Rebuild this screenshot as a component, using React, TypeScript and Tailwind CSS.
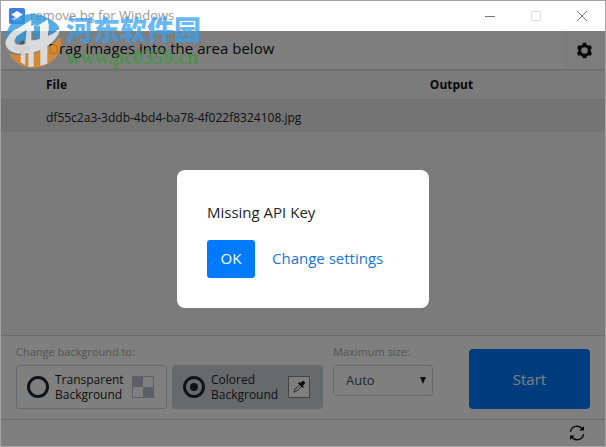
import React, { useState } from "react";

type BackgroundMode = "transparent" | "colored";

interface QueuedFile {
  name: string;
  output: string;
}

const files: QueuedFile[] = [
  { name: "df55c2a3-3ddb-4bd4-ba78-4f022f8324108.jpg", output: "" },
];

const AppIcon: React.FC = () => (
  <svg width="16" height="16" viewBox="0 0 16 16" aria-hidden="true">
    <rect width="16" height="16" rx="2" fill="#3f7fe0" />
    <path d="M8 8.2 2.5 11 8 13.8l5.5-2.8z" fill="#a9c8f7" />
    <path d="M8 3 2.2 6.6 8 10.2l5.8-3.6z" fill="#fff" />
  </svg>
);

// Six-toothed cog with a wide hole
const GearIcon: React.FC = () => (
  <svg width="17" height="17" viewBox="0 0 24 24" aria-hidden="true">
    <circle cx="12" cy="12" r="6.8" fill="none" stroke="#111" strokeWidth="4.4" />
    <path
      d="M12 1v4M12 19v4M2.5 6.5l3.4 2M18.1 15.5l3.4 2M2.5 17.5l3.4-2M18.1 8.5l3.4-2"
      stroke="#111"
      strokeWidth="5"
    />
  </svg>
);

const PickerIcon: React.FC = () => (
  <svg width="14" height="14" viewBox="0 0 16 16" aria-hidden="true">
    <path d="M8.6 5.2 3.4 10.4 2 14l3.6-1.4 5.2-5.2" fill="#f5ecd8" stroke="#555" />
    <path d="m7.4 3.8 4.8 4.8 1-1-1.1-1.2 2-2a1.8 1.8 0 0 0-2.5-2.5l-2 2-1.2-1.1z" fill="#111" stroke="#111" />
  </svg>
);

const RefreshIcon: React.FC = () => (
  <svg width="16" height="16" viewBox="0 0 16 16" fill="none" stroke="#111" strokeWidth="1.4" aria-hidden="true">
    <path d="M1.4 6.8A6.6 6.6 0 0 1 13.6 4.6M14.6 9.2A6.6 6.6 0 0 1 2.4 11.4" />
    <path d="M15 1v4.6h-4.6zM1 15v-4.6h4.6z" fill="#111" stroke="none" />
  </svg>
);

// Site badge that floats over the window's top left corner
const Watermark: React.FC = () => (
  <div className="pointer-events-none absolute top-1 left-0 z-30 flex items-center">
    <svg className="opacity-80" width="65" height="70" viewBox="3 0 195 210" aria-hidden="true">
      <path d="M17 106C18 58 52 27 98 27c30 0 52 12 66 34-25-14-59-6-82 8-28 8-50 20-65 37z" fill="#2e98dc" />
      <path d="M44 94 84 56l4 46-40 12zM102 62l26-16v52l-26 4z" fill="#2e98dc" />
      <path d="M146 40c20 10 31 24 36 36-8-4-14-1-20 10l-16 12z" fill="#2e98dc" />
      <path d="M28 146c50 12 114-4 152-50 13 38-20 92-78 92-36 0-62-18-74-42z" fill="#e88c22" />
      <path
        d="M16 112c8-24 22-36 40-43l38-25v62c11 0 18-2 26-5V62l-12 3 36-22v50c18-8 31-16 37-28-1 36-45 73-95 80-40 6-70-7-70-33zm28-8c-2 16 12 17 32 13l4-43-30 20z"
        fill="#f0f1f3"
      />
      <path d="M62 142h14v38l-14-8zM85 140h16v45H85zM121 132l21-10v54l-21 6z" fill="#f0f1f3" />
    </svg>
    <div className="flex flex-col pt-px">
      <span className="font-['Noto_Sans_CJK_SC',sans-serif] text-[27px] leading-8 font-black text-[#38a0f0]/75">
        河东软件园
      </span>
      <span className="font-['Liberation_Serif',serif] text-[20px] leading-6 font-bold text-[#2f9c2f]/60">
        www.pc0359.cn
      </span>
    </div>
  </div>
);

const TitleBar: React.FC = () => (
  <header className="flex h-[30px] items-center justify-between bg-white pr-[18px] pl-2">
    <div className="flex items-center gap-[5px]">
      <AppIcon />
      <h1 className="text-[13px] text-[#999]">remove.bg for Windows</h1>
    </div>
    <div className="flex items-center gap-9">
      <button type="button" aria-label="Minimize">
        <svg width="10" height="10" viewBox="0 0 10 10" stroke="#777" aria-hidden="true">
          <path d="M0 5.5h10" />
        </svg>
      </button>
      <button type="button" aria-label="Maximize" disabled>
        <svg width="10" height="10" viewBox="0 0 10 10" fill="none" stroke="#ddd" aria-hidden="true">
          <path d="M.5.5h9v9h-9z" />
        </svg>
      </button>
      <button type="button" aria-label="Close">
        <svg width="10" height="10" viewBox="0 0 10 10" stroke="#777" aria-hidden="true">
          <path d="m0 0 10 10M10 0 0 10" />
        </svg>
      </button>
    </div>
  </header>
);

const App: React.FC = () => {
  const [mode, setMode] = useState<BackgroundMode>("colored");
  const [size, setSize] = useState<string>("auto");
  const [showModal, setShowModal] = useState<boolean>(true);

  const optionClass =
    "flex h-11 w-[151px] items-center rounded-[3px] border border-[#ced4da] pl-2.5 text-[12px] leading-[15px] text-[#212529]";
  const radioClass =
    "flex size-[22px] shrink-0 appearance-none rounded-full border-3 border-[#212529] before:m-auto before:size-2 before:rounded-full checked:before:bg-[#212529]";

  return (
    <div className="relative flex min-h-screen flex-col border border-[#a3a3a3] bg-white font-['Open_Sans',sans-serif]">
      <TitleBar />

      <main className="relative flex grow flex-col">
        <div className="flex h-10 items-center justify-between border-b-2 border-[#e0e0e0]">
          <div className="flex items-center gap-[17px] pb-1 pl-3">
            <svg width="18" height="18" viewBox="0 0 18 18" fill="#aaa" aria-hidden="true">
              <path d="M7 1h4v6h6v4h-6v6H7v-6H1V7h6z" />
            </svg>
            <p className="text-[15px] text-[#111]">Drag images into the area below</p>
          </div>
          <button type="button" aria-label="Settings" className="flex h-full w-[42px] items-center justify-center bg-[#f8f8f8]">
            <GearIcon />
          </button>
        </div>

        <div className="grow bg-[#f6f6f6]">
          <table className="w-full table-fixed text-left text-[12px] text-[#111]">
            <thead>
              <tr className="h-7 border-b border-[#e4e4e4]">
                <th className="w-[71%] pl-[45px] font-bold">File</th>
                <th className="font-bold">Output</th>
              </tr>
            </thead>
            <tbody>
              {files.map((file) => (
                <tr key={file.name} className="h-[33px] bg-[#e8e8e8] text-[#212529]">
                  <td className="pt-1 pl-[45px]">{file.name}</td>
                  <td>{file.output}</td>
                </tr>
              ))}
            </tbody>
          </table>
        </div>

        <form
          className="flex h-[85px] items-start justify-between border-y border-[#d8d8d8] px-[15px]"
          onSubmit={(e) => e.preventDefault()}
        >
          <div className="flex gap-2.5 pt-2">
            <fieldset>
              <legend className="mb-[5px] text-[11px] leading-4 text-[#aaa]">Change background to:</legend>
              <div className="flex gap-[5px]">
                <label className={optionClass}>
                  <input
                    type="radio"
                    name="background"
                    className={radioClass}
                    checked={mode === "transparent"}
                    onChange={() => setMode("transparent")}
                  />
                  <span className="ml-1.5 w-[77px]">Transparent Background</span>
                  <span className="grid size-[22px] grid-cols-2 border border-[#b8bfce]">
                    <i className="bg-[#b8bfce]" />
                    <i />
                    <i />
                    <i className="bg-[#b8bfce]" />
                  </span>
                </label>
                <label className={`${optionClass} bg-[#ced4da]`}>
                  <input
                    type="radio"
                    name="background"
                    className={radioClass}
                    checked={mode === "colored"}
                    onChange={() => setMode("colored")}
                  />
                  <span className="ml-1.5 w-[77px]">Colored Background</span>
                  <span className="flex size-[22px] items-center justify-center border border-[#888] bg-white">
                    <PickerIcon />
                  </span>
                </label>
              </div>
            </fieldset>

            <div>
              <label htmlFor="size" className="mb-[5px] block text-[11px] leading-4 text-[#aaa]">
                Maximum size:
              </label>
              <div className="relative">
                <select
                  id="size"
                  value={size}
                  onChange={(e) => setSize(e.target.value)}
                  className="h-[31px] w-[100px] appearance-none rounded-[3px] border border-[#ced4da] bg-white pl-3 text-[13px] text-[#495057]"
                >
                  <option value="auto">Auto</option>
                  <option value="preview">Preview</option>
                  <option value="full">Full</option>
                </select>
                <svg className="absolute top-3 right-[7px]" width="6" height="7" viewBox="0 0 6 7" fill="#222" aria-hidden="true">
                  <path d="M0 0h6L3 7z" />
                </svg>
              </div>
            </div>
          </div>

          <button type="submit" className="mt-[13px] h-[60px] w-[121px] rounded-[4px] bg-[#007bff] text-[15px] text-white">
            Start
          </button>
        </form>

        <footer className="flex h-[26px] items-center justify-end pr-5">
          <button type="button" aria-label="Refresh">
            <RefreshIcon />
          </button>
        </footer>

        {showModal && (
          <div className="absolute inset-0 z-20 flex items-center justify-center bg-black/50">
            <div role="dialog" aria-modal="true" aria-labelledby="modal-title" className="w-[252px] rounded-lg bg-white p-[30px]">
              <h2 id="modal-title" className="mb-4 text-[15px] leading-6 text-[#212529]">
                Missing API Key
              </h2>
              <div className="flex items-center gap-[17px]">
                <button
                  type="button"
                  className="h-[38px] w-12 rounded-[3px] bg-[#007bff] text-[15px] text-white"
                  onClick={() => setShowModal(false)}
                >
                  OK
                </button>
                <a href="#settings" className="text-[15px] text-[#1a73e0]">
                  Change settings
                </a>
              </div>
            </div>
          </div>
        )}
      </main>

      <Watermark />
    </div>
  );
};

export default App;
